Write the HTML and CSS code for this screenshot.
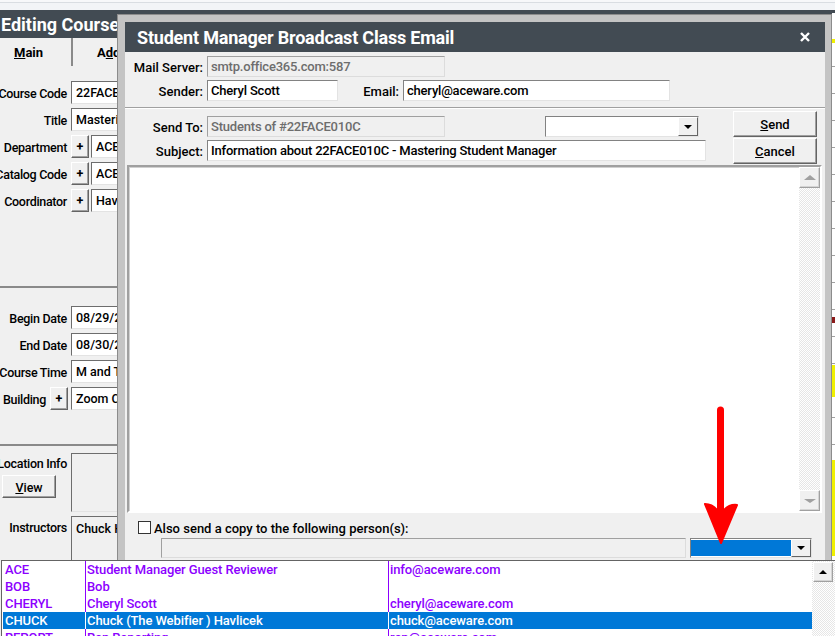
FILE: index.html
```html
<!DOCTYPE html>
<html lang="en">
<head>
    <meta charset="UTF-8">
    <title>Student Manager - Broadcast Class Email</title>
    <link rel="stylesheet" href="styles.css">
</head>
<body>
<div class="desktop">
    <div class="topstrip"></div>

    <!-- background window: course editor -->
    <div class="course-win">
        <div class="course-main">
            <div class="win-title">Editing Course</div>
            <div class="tabs">
                <div class="tab active"><u>M</u>ain</div>
                <div class="tab">A<u>d</u>ditional</div>
            </div>
            <div class="form">
                <div class="frow"><label>Course Code</label><div class="field">22FACE010C</div></div>
                <div class="frow"><label>Title</label><div class="field">Mastering Student Manager</div></div>
                <div class="frow"><label>Department</label><div class="plus">+</div><div class="field">ACE-Training</div></div>
                <div class="frow"><label>Catalog Code</label><div class="plus">+</div><div class="field">ACE-SM</div></div>
                <div class="frow"><label>Coordinator</label><div class="plus">+</div><div class="field">Havlicek, Chuck</div></div>

                <div class="fsep first"></div>

                <div class="frow"><label>Begin Date</label><div class="field">08/29/2022</div></div>
                <div class="frow"><label>End Date</label><div class="field">08/30/2022</div></div>
                <div class="frow"><label>Course Time</label><div class="field">M and Tu 9:00am</div></div>
                <div class="frow bld"><label>Building</label><div class="plus">+</div><div class="field">Zoom Classroom</div></div>

                <div class="fsep second"></div>

                <div class="lrow">
                    <div class="lcol">
                        <label>Location Info</label>
                        <div class="btn view"><u>V</u>iew</div>
                    </div>
                    <div class="box loc"></div>
                </div>
                <div class="lrow instr">
                    <div class="lcol"><label>Instructors</label></div>
                    <div class="box">Chuck Havlicek</div>
                </div>
            </div>
        </div>
        <div class="neighbor"></div>
    </div>

    <!-- dialog window -->
    <div class="dialog">
        <div class="dlg-title">
            <span>Student Manager Broadcast Class Email</span>
            <svg class="close" width="10" height="10" viewBox="0 0 10 10">
                <path d="M1 1 L9 9 M9 1 L1 9" stroke="#fff" stroke-width="2.4"/>
            </svg>
        </div>
        <div class="dlg-body">
            <div class="drow">
                <label>Mail Server:</label>
                <div class="tb dis w238">smtp.office365.com:587</div>
            </div>
            <div class="drow">
                <label>Sender:</label>
                <div class="tb w131">Cheryl Scott</div>
                <label class="email-lbl">Email:</label>
                <div class="tb w267">cheryl@aceware.com</div>
            </div>
            <div class="hsep"></div>

            <div class="sect">
                <div class="fields">
                    <div class="drow">
                        <label>Send To:</label>
                        <div class="tb dis w238">Students of #22FACE010C</div>
                        <div class="combo sendto">
                            <div class="combo-val"></div>
                            <div class="drop"><span class="tri"></span></div>
                        </div>
                    </div>
                    <div class="drow">
                        <label>Subject:</label>
                        <div class="tb w499">Information about 22FACE010C - Mastering Student Manager</div>
                    </div>
                </div>
                <div class="btns">
                    <div class="btn"><u>S</u>end</div>
                    <div class="btn"><u>C</u>ancel</div>
                </div>
            </div>

            <div class="memo">
                <div class="memo-text"></div>
                <div class="vscroll">
                    <div class="sbtn"><span class="tri up grey"></span></div>
                    <div class="strack"></div>
                    <div class="sbtn"><span class="tri grey"></span></div>
                </div>
            </div>

            <div class="ckrow">
                <span class="ck"></span>
                <span>Also send a copy to the following person(s):</span>
            </div>
            <div class="ccrow">
                <div class="tb dis w525"></div>
                <div class="combo cc">
                    <div class="combo-val picked"></div>
                    <div class="drop"><span class="tri"></span></div>
                </div>
            </div>
        </div>
    </div>

    <!-- open drop-down list of people -->
    <div class="picklist">
        <div class="plrows">
            <div class="plrow"><div class="c1">ACE</div><div class="c2">Student Manager Guest Reviewer</div><div class="c3">info@aceware.com</div></div>
            <div class="plrow"><div class="c1">BOB</div><div class="c2">Bob</div><div class="c3"></div></div>
            <div class="plrow"><div class="c1">CHERYL</div><div class="c2">Cheryl Scott</div><div class="c3">cheryl@aceware.com</div></div>
            <div class="plrow sel"><div class="c1">CHUCK</div><div class="c2">Chuck (The Webifier ) Havlicek</div><div class="c3">chuck@aceware.com</div></div>
            <div class="plrow"><div class="c1">REPORT</div><div class="c2">Rep Reporting</div><div class="c3">rep@aceware.com</div></div>
        </div>
        <div class="plscroll">
            <div class="sbtn"><span class="tri up"></span></div>
        </div>
    </div>

    <!-- annotation arrow -->
    <svg class="annot" width="45" height="150" viewBox="0 0 45 150">
        <line x1="20.5" y1="10" x2="20.5" y2="112" stroke="#ff0000" stroke-width="7" stroke-linecap="round"/>
        <path d="M5 104 Q12 104 17 110 L24 110 Q30 104 37 105 L21 143 Z" fill="#ff0000" stroke="#ff0000" stroke-width="2" stroke-linejoin="round"/>
    </svg>
</div>
</body>
</html>
```

FILE: styles.css
```css
* {
    margin: 0;
    padding: 0;
    box-sizing: border-box;
}

body {
    font-family: Roboto, "Liberation Sans", sans-serif;
    font-size: 13px;
    font-weight: 500;
    color: #000;
    background: #f0f0f0;
}

.desktop {
    position: relative;
    width: 835px;
    height: 636px;
    overflow: hidden;
    display: flex;
    flex-direction: column;
    background: #f0f0f0;
}

.topstrip {
    height: 10px;
    flex: none;
    background: linear-gradient(#f7f8fa 0 2px, #d9dde2 2px 3px, #f2f4f7 3px);
}

/* ---------- background course window ---------- */

.course-win {
    flex: 1;
    display: flex;
}

.course-main {
    flex: 1;
    background: #f0f0f0;
    font-size: 12.5px;
}

.neighbor {
    width: 3px;
    border-top: 3px solid #424b53;
    background:
        linear-gradient(to bottom, transparent 0 26px, #f0f000 26px 30px, transparent 30px 304px,
            #8b1a1a 304px 310px, transparent 310px 352px, #f0f000 352px 384px,
            transparent 384px 447px, #f0f000 447px 543px, transparent 543px),
        repeating-linear-gradient(to bottom, #fff 0 26px, #a0a0a0 26px 27px);
}

.win-title {
    height: 28px;
    background: #424b53;
    color: #fff;
    font-size: 18px;
    font-weight: 700;
    line-height: 29px;
    padding-left: 1px;
    white-space: nowrap;
}

.tabs {
    display: flex;
    height: 28px;
}

.tab {
    font-size: 13px;
    font-weight: 700;
    line-height: 30px;
    white-space: nowrap;
}

.tab.active {
    width: 73px;
    padding-left: 14px;
    border-right: 2px solid #8a8a8a;
}

.tab + .tab {
    padding-left: 24px;
}

.form {
    padding-top: 15px;
}

.frow {
    display: flex;
    align-items: center;
    gap: 4px;
    height: 23px;
    margin-bottom: 4px;
}

.frow label,
.lcol label {
    width: 67px;
    flex: none;
    display: flex;
    justify-content: flex-end;
    white-space: nowrap;
    padding-top: 1px;
    letter-spacing: -0.3px;
}

.frow.bld label {
    width: 46px;
}

.field {
    width: 300px;
    height: 23px;
    flex: none;
    background: #fff;
    border: 1px solid;
    border-color: #6d6d6d #e3e3e3 #e3e3e3 #6d6d6d;
    padding: 0 4px;
    line-height: 22px;
    white-space: nowrap;
    overflow: hidden;
}

.plus {
    width: 18px;
    height: 23px;
    flex: none;
    margin-right: -2px;
    display: flex;
    align-items: center;
    justify-content: center;
    font-weight: 700;
    background: #f0f0f0;
    border: 1px solid;
    border-color: #fff #646464 #646464 #fff;
    box-shadow: inset -1px -1px #a0a0a0;
}

.frow.bld .plus {
    margin-right: -1px;
}

.fsep {
    height: 2px;
    background: #8a8a8a;
    margin-bottom: 18px;
}

.fsep.first {
    margin-top: 74px;
}

.fsep.second {
    margin-top: 34px;
    margin-bottom: 7px;
}

.lrow {
    display: flex;
    gap: 4px;
}

.lrow.instr {
    margin-top: 4px;
}

.lcol {
    width: 67px;
    display: flex;
    flex-direction: column;
    padding-top: 2px;
}

.lrow.instr .lcol {
    padding-top: 3px;
}

.lcol label {
    line-height: 15px;
}

.box {
    width: 300px;
    height: 59px;
    background: #f0f0f0;
    border: 1px solid;
    border-color: #6d6d6d #e3e3e3 #e3e3e3 #6d6d6d;
    padding: 3px 4px;
    white-space: nowrap;
    line-height: 17px;
}

.lrow.instr .box {
    height: 60px;
}

/* ---------- buttons and small widgets ---------- */

.btn {
    width: 84px;
    height: 26px;
    display: flex;
    align-items: center;
    justify-content: center;
    padding-top: 1px;
    background: #f0f0f0;
    border: 1px solid;
    border-color: #fff #646464 #646464 #fff;
    box-shadow: inset -1px -1px #a0a0a0;
}

.btn.view {
    width: 54px;
    height: 23px;
    margin: 4px 0 0 2px;
}

.tri {
    width: 0;
    height: 0;
    border-left: 4px solid transparent;
    border-right: 4px solid transparent;
    border-top: 4px solid #000;
}

.tri.up {
    border-top: 0;
    border-bottom: 4px solid #000;
}

.tri.grey {
    border-left-width: 6px;
    border-right-width: 6px;
    border-top-color: #a0a0a0;
}

.tri.up.grey {
    border-top: 0;
    border-bottom: 5px solid #a0a0a0;
}

.sbtn {
    height: 21px;
    flex: none;
    display: flex;
    align-items: center;
    justify-content: center;
    background: #f0f0f0;
    border: 1px solid;
    border-color: #fff #a0a0a0 #a0a0a0 #fff;
    box-shadow: inset -1px -1px #d4d4d4;
}

/* ---------- dialog ---------- */

.dialog {
    position: absolute;
    left: 117px;
    top: 14px;
    width: 715px;
    height: 560px;
    display: flex;
    flex-direction: column;
    background: #c4c4c4;
    border: 1px solid #8c8c8c;
    padding: 7px 6px 0 7px;
}

.dlg-title {
    height: 30px;
    flex: none;
    display: flex;
    align-items: center;
    justify-content: space-between;
    padding: 0 15px 0 12px;
    background: #424b53;
    color: #fff;
    font-size: 18px;
    font-weight: 700;
    letter-spacing: -0.2px;
}

.dlg-body {
    flex: 1;
    background: #f0f0f0;
    padding-top: 4px;
}

.drow {
    display: flex;
    align-items: center;
    gap: 4px;
    height: 21px;
    margin-bottom: 3px;
}

.drow label {
    width: 78px;
    flex: none;
    text-align: right;
    white-space: nowrap;
    line-height: 19px;
    padding-top: 1px;
}

.drow .email-lbl {
    width: 57px;
}

.tb {
    height: 21px;
    flex: none;
    background: #fff;
    border: 1px solid;
    border-color: #828282 #e3e3e3 #e3e3e3 #828282;
    padding: 0 3px;
    line-height: 20px;
    letter-spacing: -0.2px;
    white-space: nowrap;
    overflow: hidden;
}

.tb.dis {
    background: #f0f0f0;
    color: #6d6d6d;
    border-color: #a0a0a0 #dcdcdc #dcdcdc #a0a0a0;
}

.w131 { width: 131px; }
.w238 { width: 238px; }
.w267 { width: 267px; }
.w499 { width: 499px; }
.w525 { width: 525px; height: 20px; }

.hsep {
    height: 2px;
    border-top: 1px solid #a0a0a0;
    border-bottom: 1px solid #fff;
    margin-top: 6px;
}

.sect {
    display: flex;
}

.fields {
    padding-top: 7px;
}

.btns {
    margin-left: 27px;
    padding-top: 2px;
    display: flex;
    flex-direction: column;
    gap: 1px;
}

.combo {
    height: 21px;
    flex: none;
    display: flex;
    background: #fff;
    border: 1px solid;
    border-color: #828282 #e3e3e3 #e3e3e3 #828282;
}

.combo.sendto {
    width: 154px;
    margin-left: 96px;
}

.combo.cc {
    width: 122px;
    height: 20px;
}

.combo-val {
    flex: 1;
}

.combo-val.picked {
    margin: 1px 0;
    background: #0078d7;
}

.combo .drop {
    width: 20px;
    flex: none;
    display: flex;
    align-items: center;
    justify-content: center;
    background: #f0f0f0;
    border: 1px solid;
    border-color: #fff #646464 #646464 #fff;
}

.memo {
    height: 348px;
    margin: 1px 3px 0 2px;
    display: flex;
    background: #fff;
    border: 2px solid;
    border-color: #a0a0a0 #fff #fff #a0a0a0;
    box-shadow: inset 1px 1px #d0d0d0;
}

.memo-text {
    flex: 1;
}

.vscroll {
    width: 21px;
    display: flex;
    flex-direction: column;
    background: repeating-conic-gradient(#e6e6e6 0 25%, #fff 0 50%) 0 0 / 2px 2px;
}

.strack {
    flex: 1;
}

.ckrow {
    display: flex;
    align-items: center;
    gap: 3px;
    height: 13px;
    margin-top: 8px;
    padding-left: 13px;
    white-space: nowrap;
}

.ckrow span + span {
    padding-top: 1px;
}

.ck {
    width: 13px;
    height: 13px;
    background: #fff;
    border: 1px solid #333;
}

.ccrow {
    display: flex;
    gap: 4px;
    margin-top: 4px;
    padding-left: 36px;
}

/* ---------- pick list ---------- */

.picklist {
    position: absolute;
    left: 1px;
    top: 560px;
    right: 0;
    bottom: 0;
    display: flex;
    padding-left: 1px;
    background: #fff;
    border-top: 1px solid #646464;
    border-left: 1px solid #646464;
}

.plrows {
    flex: 1;
}

.plrow {
    display: flex;
    height: 17px;
    line-height: 18px;
    letter-spacing: -0.1px;
    color: #8c00ff;
    white-space: nowrap;
}

.plrow.sel {
    background: #0078d7;
    color: #fff;
}

.c1 {
    width: 82px;
    padding-left: 2px;
}

.c2 {
    width: 303px;
    padding-left: 1px;
    border-left: 1px solid currentColor;
}

.c3 {
    flex: 1;
    padding-left: 1px;
    border-left: 1px solid currentColor;
}

.plscroll {
    width: 23px;
    padding: 1px 2px 0 1px;
    background: repeating-conic-gradient(#e6e6e6 0 25%, #fff 0 50%) 0 0 / 2px 2px;
}

.plscroll .sbtn {
    height: 20px;
}

/* ---------- annotation ---------- */

.annot {
    position: absolute;
    left: 700px;
    top: 400px;
}
```
